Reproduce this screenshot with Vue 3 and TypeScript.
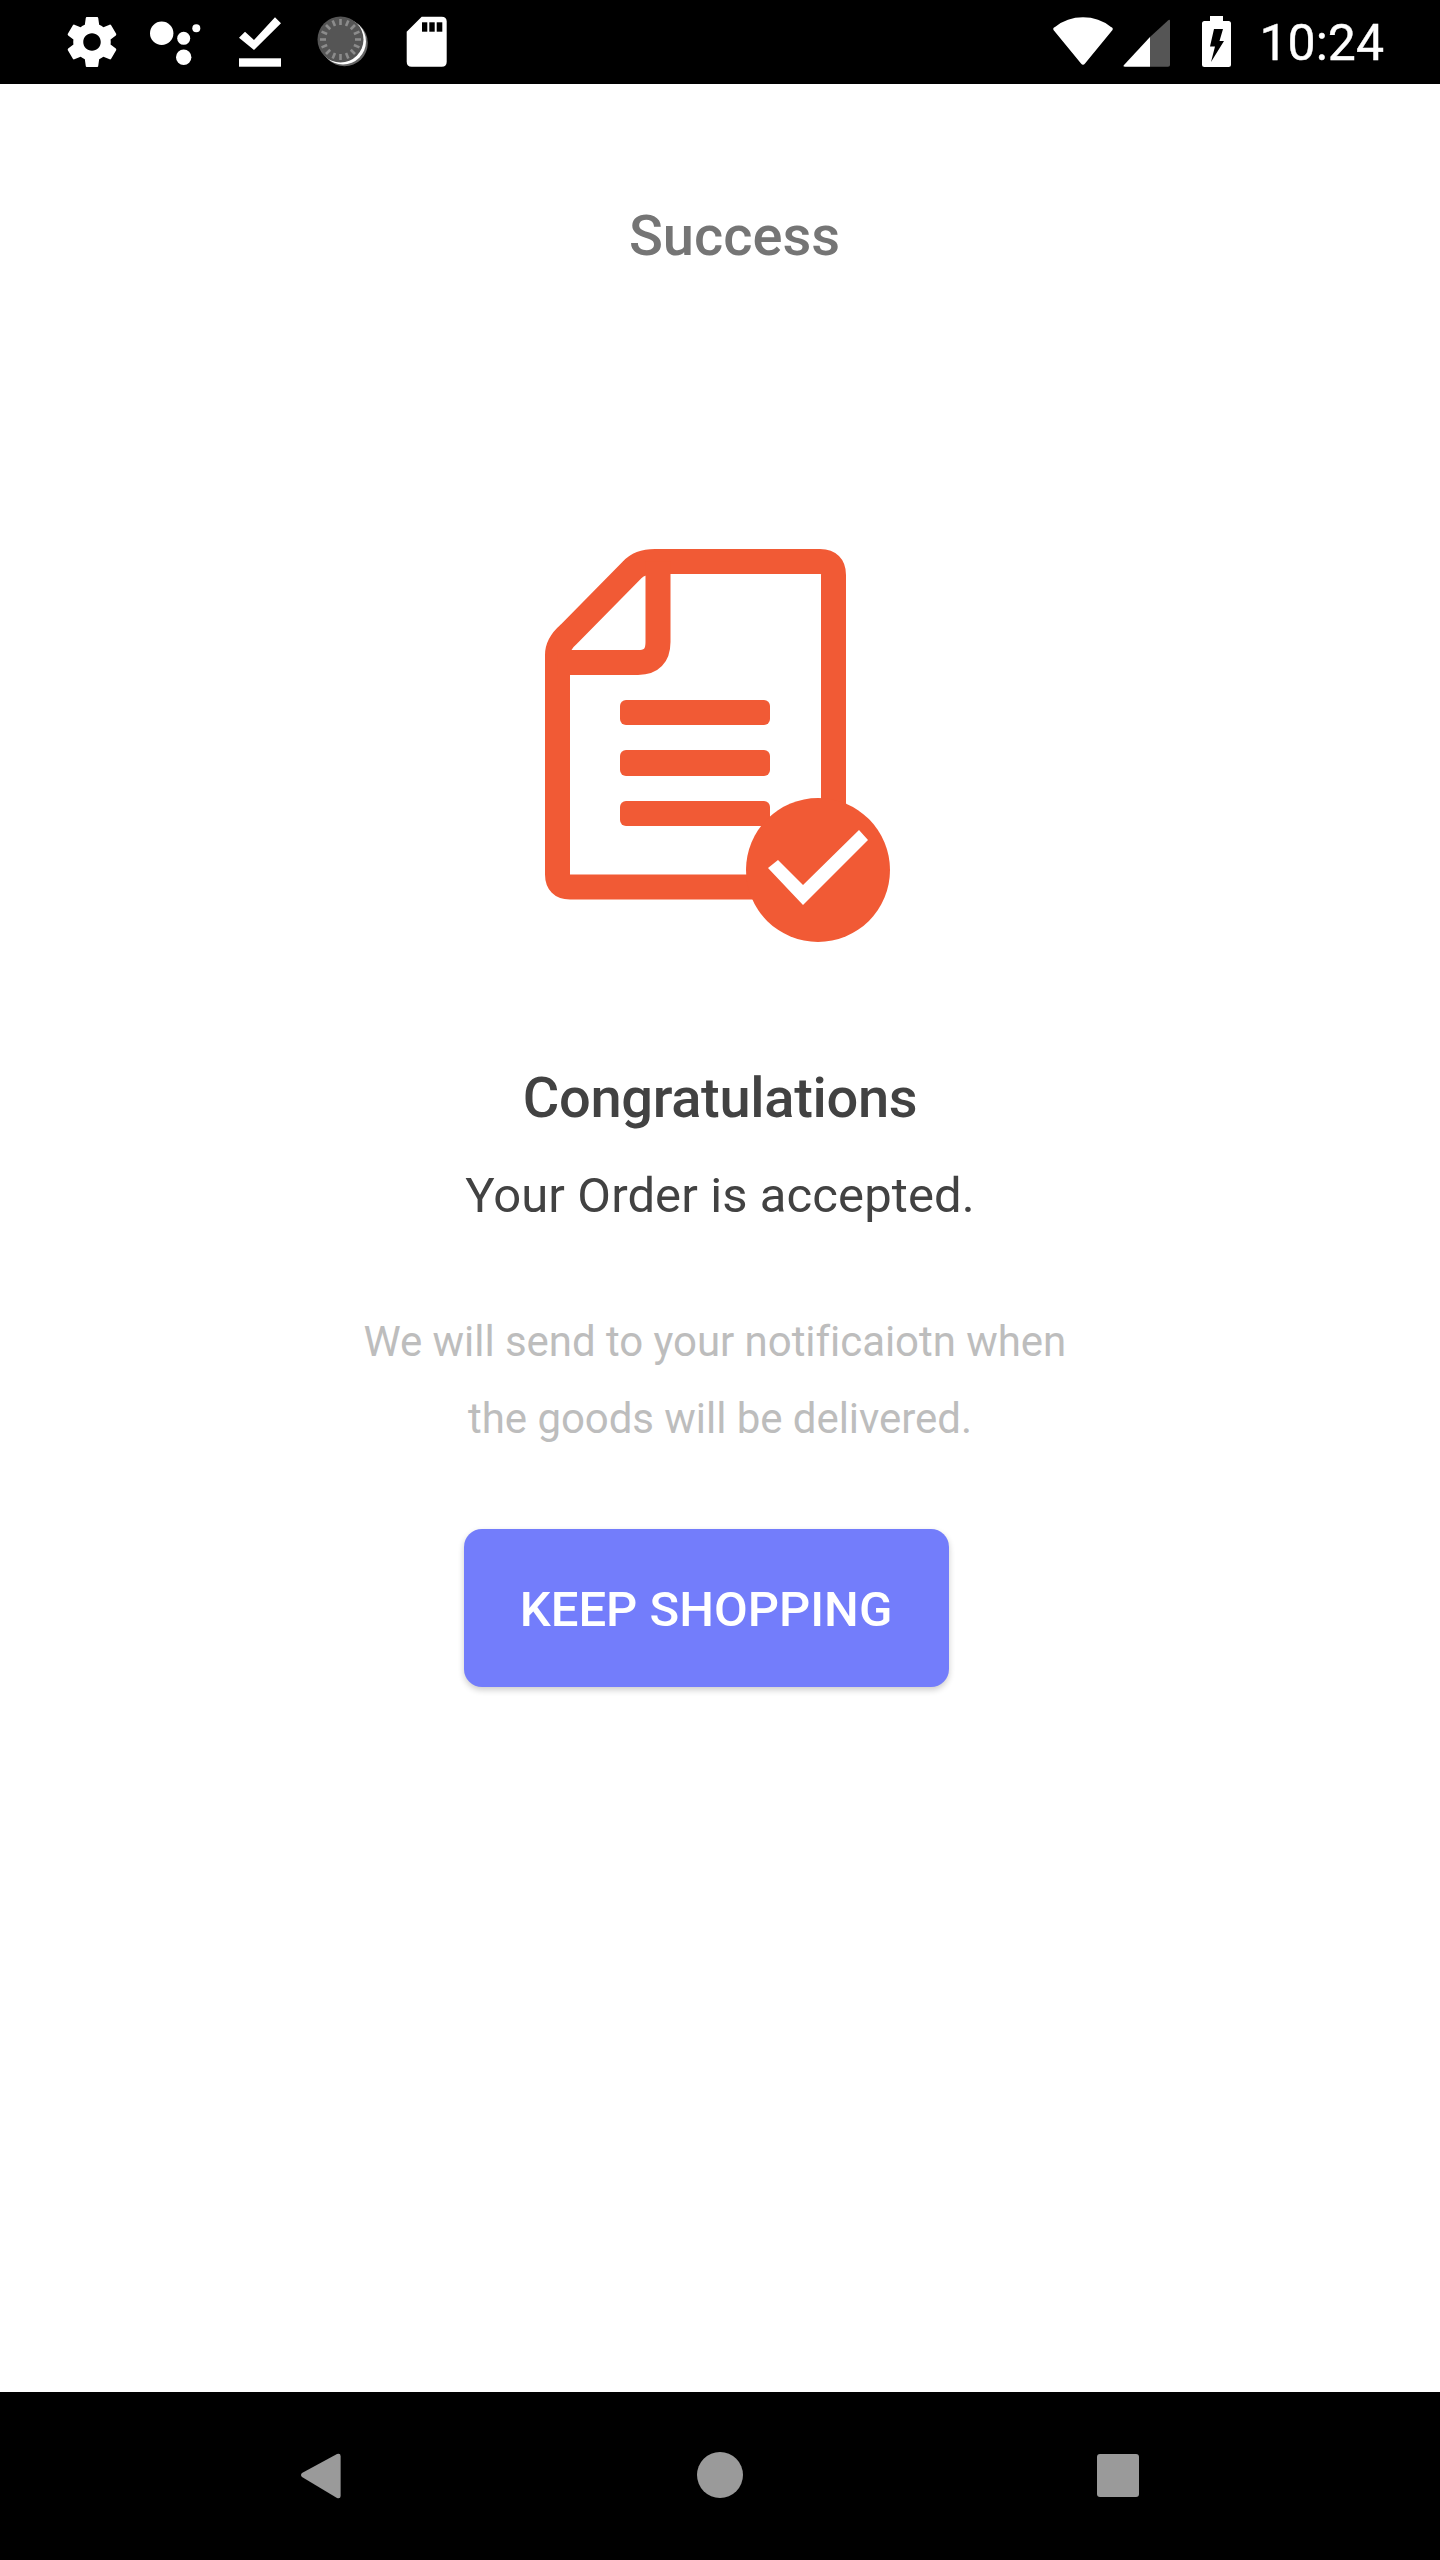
<script setup lang="ts">
// tick marks of the loading disc in the status bar
const ticks = Array.from({ length: 16 }, (_, i) => {
  const a = (i / 16) * Math.PI * 2
  return {
    x1: 340.5 + Math.cos(a) * 14.5,
    y1: 39.5 + Math.sin(a) * 14.5,
    x2: 340.5 + Math.cos(a) * 20.5,
    y2: 39.5 + Math.sin(a) * 20.5,
  }
})
</script>

<template>
  <div class="screen">
    <header class="status">
      <div class="status-left">
        <svg class="cell" viewBox="62 12 60 60" width="60" height="60">
          <path
            transform="translate(62 12) scale(2.5)"
            fill="#fff"
            d="M19.43 12.98c.04-.32.07-.64.07-.98s-.03-.66-.07-.98l2.11-1.65c.19-.15.24-.42.12-.64l-2-3.46c-.12-.22-.39-.3-.61-.22l-2.49 1c-.52-.4-1.08-.73-1.69-.98l-.38-2.65C14.46 2.18 14.25 2 14 2h-4c-.25 0-.46.18-.49.42l-.38 2.65c-.61.25-1.17.59-1.69.98l-2.49-1c-.23-.09-.49 0-.61.22l-2 3.46c-.13.22-.07.49.12.64l2.11 1.65c-.04.32-.07.65-.07.98s.03.66.07.98l-2.11 1.65c-.19.15-.24.42-.12.64l2 3.46c.12.22.39.3.61.22l2.49-1c.52.4 1.08.73 1.69.98l.38 2.65c.03.24.24.42.49.42h4c.25 0 .46-.18.49-.42l.38-2.65c.61-.25 1.17-.59 1.69-.98l2.49 1c.23.09.49 0 .61-.22l2-3.46c.12-.22.07-.49-.12-.64l-2.11-1.65zM12 15.5c-1.93 0-3.5-1.57-3.5-3.5s1.57-3.5 3.5-3.5 3.5 1.57 3.5 3.5-1.57 3.5-3.5 3.5z"
          />
        </svg>
        <svg class="cell" viewBox="146 12 60 60" width="60" height="60" fill="#fff">
          <circle cx="161.7" cy="33.3" r="11.7" />
          <circle cx="183.7" cy="38.3" r="6.5" />
          <circle cx="196.3" cy="28.3" r="4" />
          <circle cx="183.7" cy="57.3" r="7.7" />
        </svg>
        <svg class="cell" viewBox="230 12 60 60" width="60" height="60" fill="#fff">
          <polygon points="239,37.7 245,31.7 254,40 275,17.3 281,23.3 254,50" />
          <rect x="239" y="58.3" width="42" height="8.4" />
        </svg>
        <svg class="cell" viewBox="314 12 60 60" width="60" height="60">
          <circle cx="344.5" cy="43" r="23.3" fill="#666" />
          <circle cx="343" cy="41.5" r="23" fill="#fff" />
          <circle cx="340.5" cy="39.5" r="23" fill="#555" />
          <line
            v-for="(t, i) in ticks"
            :key="i"
            :x1="t.x1"
            :y1="t.y1"
            :x2="t.x2"
            :y2="t.y2"
            stroke="#8c8c8c"
            stroke-width="2.6"
          />
        </svg>
        <svg class="cell" viewBox="398 12 60 60" width="60" height="60">
          <path
            fill="#fff"
            d="M406.7 31.7L421.7 16.7H441.7Q446.7 16.7 446.7 21.7V61.7Q446.7 66.7 441.7 66.7H411.7Q406.7 66.7 406.7 61.7Z"
          />
          <rect x="422" y="22.3" width="5.3" height="9.4" fill="#000" />
          <rect x="429.3" y="22.3" width="5.4" height="9.4" fill="#000" />
          <rect x="436.7" y="22.3" width="5.6" height="9.4" fill="#000" />
        </svg>
      </div>
      <div class="status-right">
        <svg viewBox="1048 0 74 84" width="74" height="84">
          <path
            fill="#fff"
            d="M1054.5 30Q1053.5 28 1056 27Q1068 17.3 1084 17.3Q1100 17.3 1112 27Q1114.5 28 1113.5 30L1086 63.5Q1084 66 1082 63.5Z"
          />
        </svg>
        <svg viewBox="1122 0 54 84" width="54" height="84">
          <path fill="#fff" d="M1125 65Q1123.5 66.7 1126 66.7H1151V37Z" />
          <path fill="#555" d="M1151 37V66.7H1169Q1171 66.7 1171 65V21Q1171 19 1169 20.5Z" />
        </svg>
        <svg viewBox="1176 0 84 84" width="84" height="84">
          <path
            fill="#fff"
            d="M1211 16H1224V21H1229.5Q1232 21 1232 23.5V64.5Q1232 67 1229.5 67H1205.5Q1203 67 1203 64.5V23.5Q1203 21 1205.5 21H1211Z"
          />
          <polygon
            fill="#000"
            points="1215,29 1224,29 1220.5,41 1225,41 1212,62 1216,46.5 1211,46.5"
          />
        </svg>
        <span class="time">10:24</span>
      </div>
    </header>

    <main class="content">
      <h1 class="title">Success</h1>
      <svg class="doc" viewBox="0 0 380 430" width="380" height="430">
        <path
          fill="none"
          stroke="#f15a35"
          stroke-width="25"
          stroke-linejoin="round"
          d="M135 31.5H300Q313.5 31.5 313.5 45V300M260 357H50Q37.5 357 37.5 344.5V125Q37.5 114 49 104L112 40Q120 31.5 135 31.5"
        />
        <path
          fill="none"
          stroke="#f15a35"
          stroke-width="25"
          d="M37.5 132.5H118Q138 132.5 138 112V31.5"
        />
        <rect x="100" y="170" width="150" height="25" rx="6" fill="#f15a35" />
        <rect x="100" y="220" width="150" height="26" rx="6" fill="#f15a35" />
        <rect x="100" y="271" width="150" height="25" rx="6" fill="#f15a35" />
        <circle cx="298" cy="340" r="72" fill="#f15a35" />
        <polygon
          fill="#fff"
          points="248,338 258,330 283,355 339,300 348,310 283,375"
        />
      </svg>
      <h2 class="congrats">Congratulations</h2>
      <p class="accepted">Your Order is accepted.</p>
      <p class="note">We will send to your notificaiotn when&nbsp;<br />the goods will be delivered.</p>
      <button class="keep">KEEP SHOPPING</button>
    </main>

    <footer class="nav">
      <svg viewBox="295 2445 52 60" width="52" height="60">
        <path
          fill="#9a9a9a"
          d="M302 2473L337 2454Q340.6 2453 340.6 2456V2496Q340.6 2499 337 2498L302 2477Q300 2475 302 2473Z"
        />
      </svg>
      <span class="home"></span>
      <span class="recent"></span>
    </footer>
  </div>
</template>

<style scoped>
.screen {
  width: 1440px;
  height: 2560px;
  display: flex;
  flex-direction: column;
  background: #fff;
  font-family: Roboto, "Liberation Sans", sans-serif;
}

.status {
  height: 84px;
  flex: none;
  background: #000;
  display: flex;
  align-items: center;
  justify-content: space-between;
  padding: 0 56px 0 62px;
}
.status-left {
  display: flex;
  gap: 24px;
}
.status-right {
  display: flex;
  align-items: center;
}
.cell {
  display: block;
}
.status-right svg {
  display: block;
}
.time {
  color: #fff;
  font-size: 50px;
  line-height: 84px;
  font-weight: 400;
  -webkit-text-stroke: 0.4px #fff;
  position: relative;
  top: 1px;
}

.content {
  flex: 1;
  display: flex;
  flex-direction: column;
  align-items: center;
  padding-top: 120px;
}
.title {
  margin: 0;
  padding-left: 29px;
  font-size: 56px;
  line-height: 64px;
  font-weight: 500;
  color: #757575;
}
.doc {
  display: block;
  margin: 262px 20px 0 0;
}
.congrats {
  margin: 106px 0 0;
  font-size: 56px;
  line-height: 64px;
  font-weight: 500;
  letter-spacing: -0.3px;
  color: #424242;
}
.accepted {
  margin: 34px 0 0;
  font-size: 49px;
  line-height: 64px;
  letter-spacing: 0.1px;
  color: #424242;
}
.note {
  margin: 75px 0 0;
  font-size: 42px;
  line-height: 77px;
  text-align: center;
  letter-spacing: -0.05px;
  color: #bdbdbd;
}
.keep {
  margin: 72px 28px 0 0;
  padding: 3px 0 0;
  width: 485px;
  height: 158px;
  border: 0;
  border-radius: 18px;
  background: #737dfb;
  color: #fff;
  font-family: inherit;
  font-size: 49px;
  font-weight: 500;
  box-shadow: 0 3px 6px rgba(0, 0, 0, 0.2);
}

.nav {
  height: 168px;
  flex: none;
  background: #000;
  position: relative;
}
.nav svg {
  position: absolute;
  left: 295px;
  top: 53px;
}
.home {
  position: absolute;
  left: 697px;
  top: 60px;
  width: 46px;
  height: 46px;
  border-radius: 50%;
  background: #9a9a9a;
}
.recent {
  position: absolute;
  left: 1097px;
  top: 62px;
  width: 42px;
  height: 43px;
  border-radius: 3px;
  background: #9a9a9a;
}
</style>
